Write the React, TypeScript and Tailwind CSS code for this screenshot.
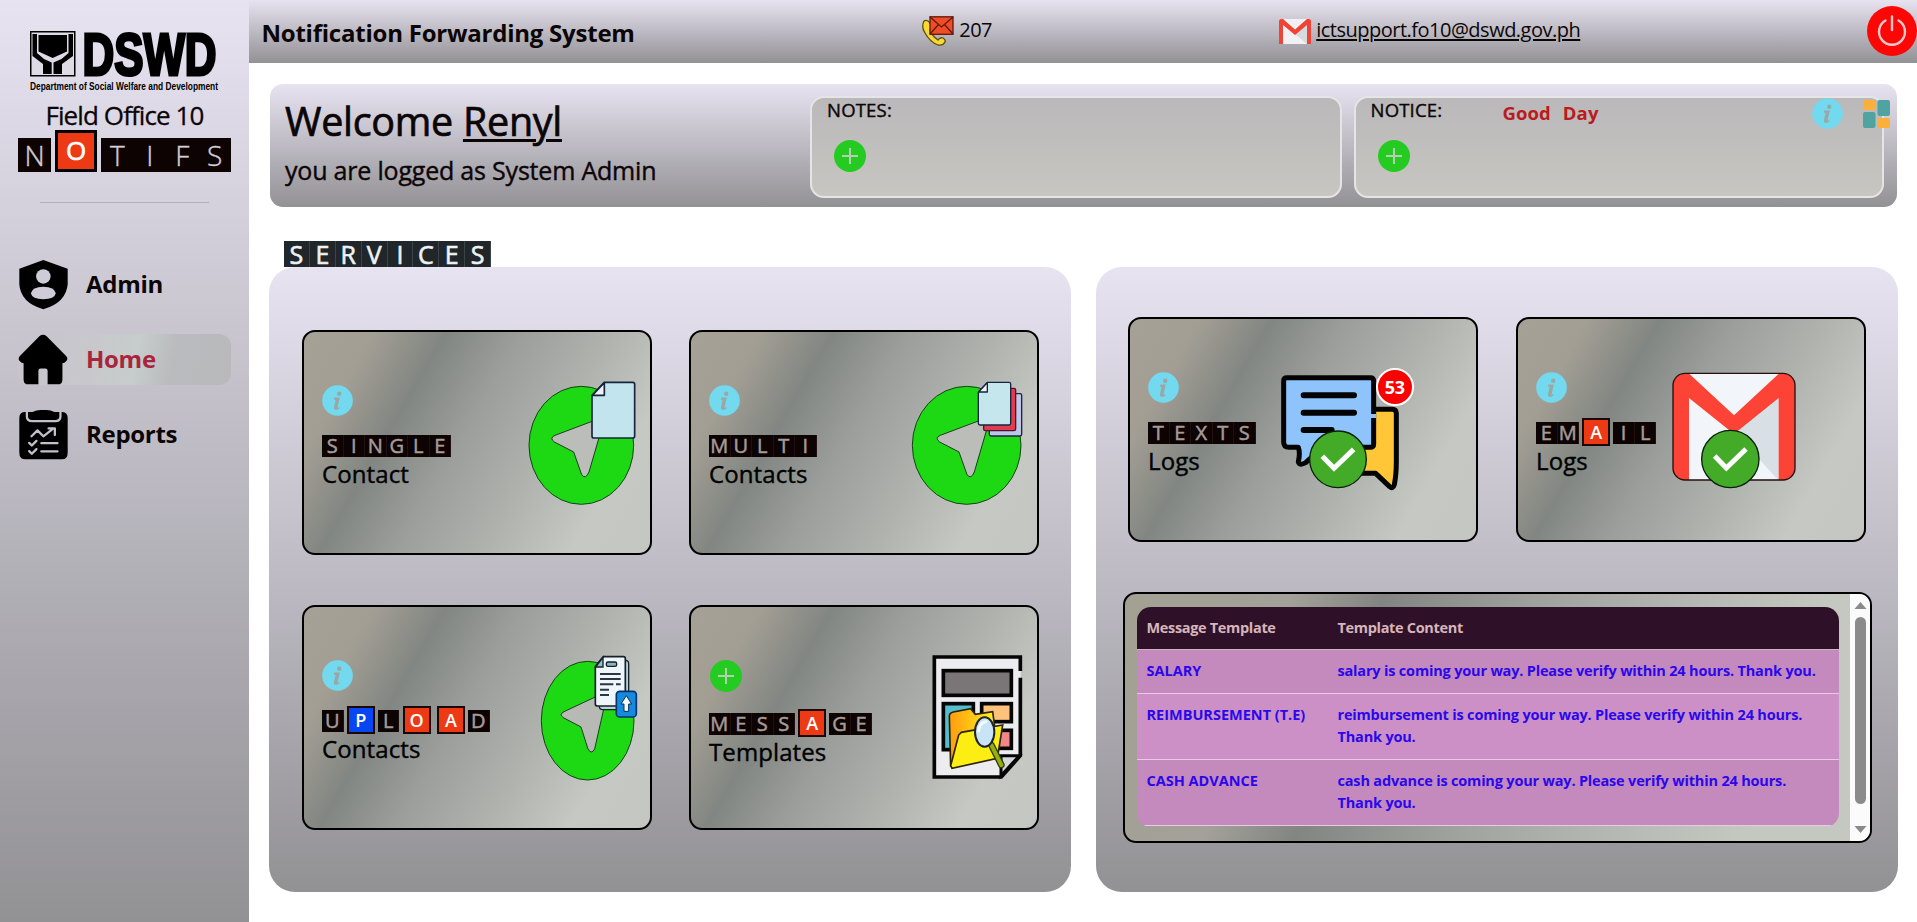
import type { ReactNode } from "react";

const CARD_BG =
  "bg-[linear-gradient(120deg,#a6a196_0%,#a29e94_15%,#828682_30%,#9b9e9b_46%,#b0b2ae_65%,#c6c8c3_83%,#c4c7c1_100%)]";

function Info({ className = "" }: { className?: string }) {
  return (
    <svg viewBox="0 0 31 31" className={`block size-[31px] ${className}`}>
      <circle cx="15.5" cy="15.5" r="15.3" fill="#73d9ef" />
      <circle cx="17.2" cy="8.8" r="2.2" fill="#9aa7a5" />
      <path d="M12.2 12.600h5.600l-2.300 9.600c-.1.6.4.8 1.800-.3v1.500c-2 2-6 2-5.400-1l1.700-7.600h-1.700z" fill="#9aa7a5" />
    </svg>
  );
}

function Plus({ className = "" }: { className?: string }) {
  return (
    <svg viewBox="0 0 32 32" className={`block size-8 ${className}`}>
      <circle cx="16" cy="16" r="16" fill="#24cb20" />
      <path d="M16 8v16M8 16h16" stroke="#b9cdb4" strokeWidth="2" fill="none" />
    </svg>
  );
}

function Tiles({ word, red = [], blue = [] }: { word: string; red?: number[]; blue?: number[] }) {
  return (
    <div className="flex h-[28px] items-center">
      {word.split("").map((ch, i) => {
        const hot = red.includes(i) || blue.includes(i);
        return hot ? (
          <span
            key={i}
            className={`mx-[3.200px] flex size-[28px] shrink-0 -translate-y-[1px] items-center justify-center border-2 border-[#1a0806] text-[18px] leading-none font-semibold text-white ${
              blue.includes(i) ? "bg-[#0846f2]" : "bg-[#ee3a14]"
            }`}
          >
            {ch}
          </span>
        ) : (
          <span
            key={i}
            className="flex h-[22px] w-[21.500px] shrink-0 items-center justify-center border-r border-[#201010] bg-[#0e0303] text-[20px] leading-none text-[#a59c98] [-webkit-text-stroke:0.500px]"
          >
            {ch}
          </span>
        );
      })}
    </div>
  );
}

function Card({
  word,
  label,
  icon = "info",
  red,
  blue,
  art,
}: {
  word: string;
  label: string;
  icon?: "info" | "plus";
  red?: number[];
  blue?: number[];
  art: ReactNode;
}) {
  return (
    <div className={`flex h-[225px] w-[350px] items-start rounded-[13px] border-2 border-black pl-[18px] ${CARD_BG}`}>
      <div className="mt-[53px] w-[170px] shrink-0">
        {icon === "info" ? <Info className="mb-[16px]" /> : <Plus className="mb-[18px] ml-[1px]" />}
        <Tiles word={word} red={red} blue={blue} />
        <div className="-mt-[1px] text-[24px] leading-[30px] tracking-[0.100px] text-black [-webkit-text-stroke:0.400px]">{label}</div>
      </div>
      {art}
    </div>
  );
}

function SendShape({ rx, cx }: { rx: number; cx: number }) {
  return (
    <>
      <ellipse cx={cx} cy="376" rx={rx} ry="177" fill="#1cd914" stroke="#173f18" strokeWidth="3" />
      <path
        transform={`translate(${cx - 873} 0)`}
        d="M794 346L916 300Q940 294 934 326L896 456Q886 480 874 464L850 396L792 366Q776 354 794 346Z"
        fill="#bbbdb9"
        stroke="#1c3a1c"
        strokeWidth="3"
      />
    </>
  );
}

function SingleArt() {
  return (
    <svg viewBox="710 180 330 380" className="mt-[48px] ml-[34.700px] h-[126.670px] w-[110px] shrink-0">
      <SendShape cx={873} rx={157} />
      <path d="M942 187H1027Q1033 187 1033 193V348Q1033 354 1027 354H911Q905 354 905 348V226Z" fill="#c2e4ec" stroke="#16243c" strokeWidth="5" />
      <path d="M942 188V226H906Z" fill="#eef3fb" stroke="#16243c" strokeWidth="5" strokeLinejoin="round" />
    </svg>
  );
}

function MultiArt() {
  return (
    <svg viewBox="690 180 345 380" className="mt-[48px] ml-[31px] h-[126.670px] w-[115px] shrink-0">
      <SendShape cx={860} rx={163} />
      <rect x="928" y="221" width="97" height="127" rx="5" fill="#bcc9e6" stroke="#211f4c" strokeWidth="4" />
      <rect x="911" y="205" width="96" height="127" rx="5" fill="#e03c50" stroke="#4b1636" strokeWidth="4" />
      <path d="M922 187H987Q992 187 992 192V310Q992 315 987 315H900Q895 315 895 310V216Z" fill="#c4e6ec" stroke="#18243f" strokeWidth="4" />
      <path d="M922 188V216H896Z" fill="#eef3fb" stroke="#18243f" strokeWidth="4" strokeLinejoin="round" />
    </svg>
  );
}

function UploadArt() {
  return (
    <svg viewBox="750 190 295 390" className="mt-[46.300px] ml-[48px] h-[130px] w-[98.330px] shrink-0">
      <ellipse cx="893" cy="393" rx="139" ry="178" fill="#1cd914" stroke="#173f18" strokeWidth="3" />
      <path d="M822 366L920 320Q950 312 944 345L914 478Q904 496 894 478L873 412L820 384Q806 374 822 366Z" fill="#b7bab4" stroke="#1c3a1c" strokeWidth="3" />
      <path d="M928 222Q928 212 938 212H1006Q1016 212 1016 222V350Q1016 360 1006 360H938Q928 360 928 350Z" fill="#b9d3dc" stroke="#152029" strokeWidth="4" />
      <path d="M940 201H1000Q1006 201 1006 207V343Q1006 349 1000 349H922Q916 349 916 343V230Z" fill="#eef5fb" stroke="#152029" strokeWidth="5" />
      <path d="M939 203V232H917Z" fill="#8cc3c8" stroke="#152029" strokeWidth="4" />
      <rect x="949" y="217" width="31" height="13" rx="5" fill="#8cb4bc" stroke="#152029" strokeWidth="4" />
      <path d="M930 253H992M930 268H992M930 284H970M978 284H992M930 300H957M930 316H957" stroke="#2e3540" strokeWidth="6" />
      <rect x="979" y="305" width="60" height="77" rx="10" fill="#158be0" stroke="#07336a" strokeWidth="5" />
      <path d="M1009 318L1025 343H1016V365H1002V343H993Z" fill="#f2fbff" stroke="#0a2c55" strokeWidth="3" />
    </svg>
  );
}

function TemplateArt() {
  return (
    <svg viewBox="750 190 285 385" className="mt-[46.300px] ml-[51px] h-[128.330px] w-[95px] shrink-0">
      <defs>
        <linearGradient id="folderBack" x1="0" x2="1">
          <stop offset="0" stopColor="#ff9b10" />
          <stop offset="1" stopColor="#fff31a" />
        </linearGradient>
      </defs>
      <path d="M763 202H1022V498L964 562H763Z" fill="#ededf0" />
      <path d="M1021 244V202H763V562H964L1021 498V264" fill="none" stroke="#050505" strokeWidth="11" />
      <path d="M963 558V498H1018Z" fill="#d6d7dc" stroke="#050505" strokeWidth="9" />
      <rect x="790" y="243" width="204" height="74" fill="#7a7677" stroke="#050505" strokeWidth="11" />
      <rect x="790" y="342" width="90" height="138" fill="#54bdd0" stroke="#050505" strokeWidth="11" />
      <rect x="905" y="342" width="89" height="54" fill="#ffc27c" stroke="#050505" strokeWidth="11" />
      <rect x="930" y="422" width="64" height="54" fill="#f38687" stroke="#050505" strokeWidth="11" />
      <path d="M812 530L808 380Q808 370 820 367L872 357L886 374L938 366L944 410L846 430Z" fill="url(#folderBack)" stroke="#2d2405" strokeWidth="5" />
      <path d="M836 436L844 428L968 406L952 506L816 536L812 528Z" fill="#fcee12" stroke="#2d2405" strokeWidth="5" />
      <path d="M934 466L964 526" stroke="#2d3a05" strokeWidth="20" strokeLinecap="round" />
      <path d="M934 466L964 526" stroke="#95ae14" strokeWidth="12" strokeLinecap="round" />
      <ellipse cx="914" cy="427" rx="29" ry="44" fill="#c9e4f6" stroke="#20262c" strokeWidth="6" />
      <path d="M896 424Q898 398 918 396" stroke="#f4fbff" strokeWidth="9" fill="none" strokeLinecap="round" />
    </svg>
  );
}

function CheckMark({ cx, cy, r }: { cx: number; cy: number; r: number }) {
  return (
    <>
      <circle cx={cx} cy={cy} r={r} fill="#43ab27" stroke="#06200a" strokeWidth="4" />
      <path d={`M${cx - 47} ${cy - 9}L${cx - 12} ${cy + 27}L${cx + 47} ${cy - 30}`} fill="none" stroke="#fff" strokeWidth="15" />
    </>
  );
}

function TextsArt() {
  return (
    <div className="relative mt-[48.500px] -ml-[39px] shrink-0">
      <svg viewBox="510 200 410 375" className="h-[125px] w-[136.670px]">
        <path d="M790 324H850Q862 324 862 336V480Q862 520 856 550Q852 564 842 556L800 516H740V324Z" fill="#ffc738" stroke="#030303" strokeWidth="15" strokeLinejoin="round" />
        <path
          d="M534 229H784Q794 229 794 239V428Q794 438 784 438H640L590 484Q572 494 568 482Q574 454 568 438H540Q524 438 524 422V239Q524 229 534 229Z"
          fill="#8ec4fb"
          stroke="#030303"
          strokeWidth="15"
          strokeLinejoin="round"
        />
        <path d="M786 338H802V350H786Z" fill="#8ec4fb" />
        <path d="M584 282H735M584 334H735M584 386H668" stroke="#030303" strokeWidth="18" strokeLinecap="round" />
        <CheckMark cx={687} cy={474} r={85} />
      </svg>
      <span className="absolute top-0 right-[2px] flex size-[38px] items-center justify-center rounded-full border-2 border-white bg-[#fb0202] text-[18px] leading-none font-bold tracking-[-0.5px] text-white">
        53
      </span>
    </div>
  );
}

function MailArt() {
  return (
    <svg viewBox="510 205 390 365" className="mt-[49.500px] -ml-[36px] h-[121.670px] w-[130px] shrink-0">
      <defs>
        <clipPath id="mailClip">
          <rect x="519" y="218" width="366" height="320" rx="36" />
        </clipPath>
      </defs>
      <g clipPath="url(#mailClip)">
        <rect x="519" y="218" width="366" height="320" fill="#f2f5f9" />
        <path d="M836 292L702 392L836 540Z" fill="#d9e0e5" />
        <path d="M519 218H566L702 344L838 218H885V540H836V292L702 400L567 292V540H519Z" fill="#fc4335" />
      </g>
      <rect x="519" y="218" width="366" height="320" rx="36" fill="none" stroke="#26100e" strokeWidth="4" />
      <CheckMark cx={691} cy={475} r={86} />
    </svg>
  );
}

function DswdLogo() {
  return (
    <svg viewBox="0 -14 192 78" className="h-[78px] w-[192px] shrink-0 text-black">
      <rect x=".75" y=".75" width="44" height="44" fill="#dedae6" stroke="currentColor" strokeWidth="1.500" />
      <path d="M2.500 3H7V22L14 28L21.700 31.500V43H13V33L2.500 25Z" fill="currentColor" />
      <path d="M43 3H38.500V22L31.500 28L23.500 31.500V43H32V33L43 25Z" fill="currentColor" />
      <path d="M8.500 4H37V20.500L22.700 27L8.500 20.500Z" fill="currentColor" />
      <text
        x="52.500"
        y="43.500"
        textLength="134"
        lengthAdjust="spacingAndGlyphs"
        fill="currentColor"
        stroke="currentColor"
        strokeWidth="3.200"
        className="font-['Liberation_Sans',sans-serif] text-[60px] font-bold"
      >
        DSWD
      </text>
      <text
        x="0"
        y="59"
        textLength="188"
        lengthAdjust="spacingAndGlyphs"
        fill="currentColor"
        className="font-['Liberation_Sans',sans-serif] text-[10.500px] font-bold"
      >
        Department of Social Welfare and Development
      </text>
    </svg>
  );
}

function ShieldIcon() {
  return (
    <svg viewBox="54 56 153 155" className="h-[51px] w-[51px]">
      <path d="M130 59L204 86V132Q200 188 130 209Q60 188 57 132V86Z" fill="#000" />
      <circle cx="130" cy="109" r="22" fill="#cfcbd7" />
      <path d="M92 160Q96 140 130 140Q164 140 168 160Q164 178 130 178Q96 178 92 160Z" fill="#cfcbd7" />
    </svg>
  );
}

function HouseIcon() {
  return (
    <svg viewBox="54 282 153 155" className="h-[51px] w-[51px]">
      <path d="M118 289Q129 280 140 289L200 350Q206 358 200 364Q194 371 188 371V420Q188 435 173 435H143V394Q143 387 136 387H122Q115 387 115 394V435H85Q70 435 70 420V371Q64 371 58 364Q52 357 58 350Z" fill="#000" />
    </svg>
  );
}

function ReportIcon() {
  return (
    <svg viewBox="54 507 153 155" className="h-[51px] w-[51px]">
      <path d="M72 516H188Q204 518 204 534V640Q204 660 186 660H76Q57 660 57 640V534Q57 518 72 516Z" fill="#000" />
      <path d="M80 516V530Q80 544 96 544H166Q182 544 182 530V516" fill="none" stroke="#c3bfcb" strokeWidth="7" />
      <path d="M86 532Q94 510 122 510H140Q166 510 174 532Q174 538 166 538H94Q86 538 86 532Z" fill="#000" />
      <path d="M94 590L112 572L130 590L158 568M146 566H165V586M124 611H173M124 636H173M87 610L95 618L109 604M87 635L95 643L109 629" fill="none" stroke="#c3bfcb" strokeWidth="7" strokeLinecap="round" strokeLinejoin="round" />
    </svg>
  );
}

function CallMailIcon() {
  return (
    <svg viewBox="0 0 32 30" className="h-[30px] w-[32px]">
      <path d="M2 5Q-1 11 3 17Q8 26 16 29Q21 30 23 26Q24 24 21 22Q18 21 16 24Q10 20 8 14Q11 11 8 7Q5 3 2 5Z" fill="#f8d92f" stroke="#5c4a14" strokeWidth="1.300" />
      <rect x="8" y=".8" width="23" height="17.500" fill="#ef4d26" stroke="#5d170e" strokeWidth="1.300" />
      <path d="M8 1L19.500 11L31 1M8 18L16.500 8.500M31 18L22.500 8.500" fill="none" stroke="#5d170e" strokeWidth="1.200" />
    </svg>
  );
}

function GmailIcon() {
  return (
    <svg viewBox="0 0 32 25" className="h-[25px] w-[32px]">
      <rect width="32" height="25" rx="2" fill="#f1f1f4" />
      <path d="M28 6L16 15L28 25Z" fill="#d6d9dd" />
      <path d="M0 2Q0 0 2 0H4L16 10.500L28 0H30Q32 0 32 2V25H28V6L16 16L4 6V25H0Z" fill="#ef4335" />
    </svg>
  );
}

const nav = [
  { label: "Admin", icon: <ShieldIcon />, active: false },
  { label: "Home", icon: <HouseIcon />, active: true },
  { label: "Reports", icon: <ReportIcon />, active: false },
];

const templates = [
  { name: "SALARY", text: "salary is coming your way. Please verify within 24 hours. Thank you.", row: "h-[44px] bg-[#c489bd]" },
  { name: "REIMBURSEMENT (T.E)", text: "reimbursement is coming your way. Please verify within 24 hours. Thank you.", row: "h-[66px] bg-[#cc90c6]" },
  { name: "CASH ADVANCE", text: "cash advance is coming your way. Please verify within 24 hours. Thank you.", row: "h-[66px] bg-[#c489bd]" },
];

const NOTE =
  "h-[102px] rounded-[14px] border-2 border-[#e6e5e6] bg-[linear-gradient(#bab8ba,#c7c6c0)]";

export default function App() {
  return (
    <div className="flex h-[922px] w-[1917px] overflow-hidden bg-white font-['Open_Sans','Noto_Sans',sans-serif] text-[#0c0506]">
      <aside className="flex w-[249px] shrink-0 flex-col bg-[linear-gradient(#e7e3f1,#929194)] px-[18px] pt-[17px]">
        <div className="flex justify-center pl-[3px]">
          <DswdLogo />
        </div>
        <div className="mt-[2px] text-center text-[26px] leading-[36px] tracking-[-0.900px] [-webkit-text-stroke:0.300px]">Field Office 10</div>
        <div className="-mt-[2px] flex h-[41px] items-end">
          <span className="flex h-[34px] w-[33px] items-center justify-center bg-[#0e0303] text-[28px] leading-none font-light text-[#d5cdd2] [-webkit-text-stroke:0.400px]">N</span>
          <span className="mx-[4px] flex size-[42px] items-center justify-center border-[3px] border-black bg-[#ee3a14] pb-[2px] text-[26px] leading-none text-white [-webkit-text-stroke:0.600px]">O</span>
          {["T", "I", "F", "S"].map((c) => (
            <span key={c} className="flex h-[34px] w-[32.500px] items-center justify-center bg-[#0e0303] text-[28px] leading-none font-light text-[#d5cdd2] [-webkit-text-stroke:0.400px]">
              {c}
            </span>
          ))}
        </div>
        <div className="mx-[22px] mt-[30px] h-px bg-[#b3b0ba]" />
        <nav className="mt-[56px] flex flex-col gap-[24px]">
          {nav.map((n) => (
            <div
              key={n.label}
              className={`flex h-[51px] items-center gap-[17px] rounded-[12px] pb-px text-[24px] font-bold tracking-[-0.300px] ${
                n.active ? "bg-[linear-gradient(100deg,#c8c4ce_0%,#c8c8cc_35%,#c6cdcb_55%,#babbbe_72%,#b9b9bc_100%)] text-[#a8253d]" : ""
              }`}
            >
              {n.icon}
              {n.label}
            </div>
          ))}
        </nav>
      </aside>

      <div className="flex w-[1668px] flex-col">
        <header className="flex h-[63px] shrink-0 items-start bg-[linear-gradient(#e7e3f1,#929194)] pl-[12.500px]">
          <h1 className="mt-[16px] w-[661px] text-[24px] leading-[34px] font-bold tracking-[-0.230px]">Notification Forwarding System</h1>
          <div className="mt-[16px] flex w-[357px] items-start gap-[5px]">
            <CallMailIcon />
            <span className="text-[20px] leading-[28px] tracking-[-0.6px]">207</span>
          </div>
          <div className="mt-[16px] flex w-[588px] items-start gap-[5px]">
            <div className="mt-[3px]">
              <GmailIcon />
            </div>
            <a className="text-[20px] leading-[28px] tracking-[-0.500px] underline decoration-[1.500px] underline-offset-[2px]">ictsupport.fo10@dswd.gov.ph</a>
          </div>
          <svg viewBox="0 0 50 50" className="mt-[6px] h-[50px] w-[50px] shrink-0">
            <circle cx="25" cy="25" r="25" fill="#fd0606" />
            <path d="M18.500 14.500A13 13 0 1 0 31.500 14.500M25 10.500V24" fill="none" stroke="#ecc8c8" strokeWidth="2.400" strokeLinecap="round" />
          </svg>
        </header>

        <section className="mt-[21px] ml-[21px] flex h-[123px] w-[1627px] items-start rounded-[13px] bg-[linear-gradient(#e7e3f1,#929194)] pt-[12px] pl-[15px]">
          <div className="w-[525px]">
            <div className="text-[39.500px] leading-[50px] tracking-[-0.300px] [-webkit-text-stroke:0.700px]">
              Welcome <span className="underline decoration-[3px] underline-offset-[3px]">Renyl</span>
            </div>
            <div className="mt-[8px] text-[25px] leading-[32px] tracking-[-0.200px] [-webkit-text-stroke:0.400px]">you are logged as System Admin</div>
          </div>
          <div className={`w-[532px] pl-[15px] ${NOTE}`}>
            <div className="text-[18.500px] leading-[24px] tracking-[0.200px] [-webkit-text-stroke:0.400px]">NOTES:</div>
            <Plus className="mt-[18px] ml-[7px]" />
          </div>
          <div className={`relative ml-[12px] w-[530px] pl-[14.500px] ${NOTE}`}>
            <div className="flex h-[24px]">
              <div className="w-[132px] text-[18.500px] leading-[24px] tracking-[0.200px] [-webkit-text-stroke:0.400px]">NOTICE:</div>
              <div className="mt-[3px] text-[18.500px] leading-[24px] font-bold tracking-[0.100px] text-[#bb1a20] [word-spacing:7px]">Good Day</div>
            </div>
            <Plus className="mt-[18px] ml-[7px]" />
            <Info className="absolute top-0 right-[39px]" />
            <svg viewBox="0 0 27 28" className="absolute top-[2px] -right-[8px] h-[28px] w-[27px]">
              <rect width="12.500" height="10" rx="2" fill="#fbb03c" />
              <rect x="14.500" width="12.500" height="16" rx="2" fill="#4fa3a0" />
              <rect y="12" width="12.500" height="16" rx="2" fill="#4fa3a0" />
              <rect x="14.500" y="18" width="12.500" height="10" rx="2" fill="#fbb03c" />
            </svg>
          </div>
        </section>

        <div className="mt-[34px] ml-[35px] flex h-[26px]">
          {"SERVICES".split("").map((c, i) => (
            <span key={i} className="flex w-[25.900px] items-center justify-center border-r border-[#3b4448] bg-[#20262a] text-[25px] leading-none text-[#eef2f2] [-webkit-text-stroke:0.600px]">
              {c}
            </span>
          ))}
        </div>

        <div className="ml-[20px] flex gap-[25px]">
          <section className="grid h-[625px] w-[802px] grid-cols-[350px_350px] content-start gap-x-[37px] gap-y-[50px] rounded-[26px] bg-[linear-gradient(#e7e3f1,#929194)] pt-[63px] pl-[33px]">
            <Card word="SINGLE" label="Contact" art={<SingleArt />} />
            <Card word="MULTI" label="Contacts" art={<MultiArt />} />
            <Card word="UPLOAD" label="Contacts" red={[3, 4]} blue={[1]} art={<UploadArt />} />
            <Card word="MESSAGE" label="Templates" icon="plus" red={[4]} art={<TemplateArt />} />
          </section>

          <section className="h-[625px] w-[802px] rounded-[26px] bg-[linear-gradient(#e7e3f1,#929194)] pt-[50px]">
            <div className="ml-[32px] flex gap-[38px]">
              <Card word="TEXTS" label="Logs" art={<TextsArt />} />
              <Card word="EMAIL" label="Logs" red={[2]} art={<MailArt />} />
            </div>
            <div className="mt-[50px] ml-[27px] flex h-[251px] w-[749px] overflow-hidden rounded-[13px] border-2 border-black bg-[linear-gradient(110deg,#a3a093_0%,#a3a199_20%,#838582_31%,#a0a29e_50%,#b9bcb6_72%,#c4c8c0_85%,#c4c8c0_100%)]">
              <div className="mt-[13px] ml-[11.500px] h-[220px] w-[702px] overflow-hidden rounded-[14px] text-[14.500px] leading-[22px] font-bold">
                <div className="grid h-[43px] grid-cols-[191px_1fr] border-b border-[#cdb5c6] bg-[#2e1128] pt-[10px] pl-[10px] tracking-[-0.330px] text-[#d7b5ba]">
                  <span>Message Template</span>
                  <span>Template Content</span>
                </div>
                {templates.map((t) => (
                  <div key={t.name} className={`grid grid-cols-[191px_1fr] border-b border-[#e8c9e6] pt-[10px] pr-[16px] pl-[10px] text-[#2a08ea] ${t.row}`}>
                    <span>{t.name}</span>
                    <span className="tracking-[-0.180px]">{t.text}</span>
                  </div>
                ))}
              </div>
              <div className="ml-auto flex w-[20px] flex-col items-center bg-[#fbfbfb] pt-[8px]">
                <svg viewBox="0 0 12 7" className="h-[7px] w-[13px]">
                  <path d="M0 7L6 0L12 7Z" fill="#8a8a8a" />
                </svg>
                <div className="mt-[8px] h-[187px] w-[11px] rounded-full bg-[#8b8b8b]" />
                <svg viewBox="0 0 12 7" className="mt-[22px] h-[7px] w-[13px]">
                  <path d="M0 0L6 7L12 0Z" fill="#8a8a8a" />
                </svg>
              </div>
            </div>
          </section>
        </div>
      </div>
    </div>
  );
}
